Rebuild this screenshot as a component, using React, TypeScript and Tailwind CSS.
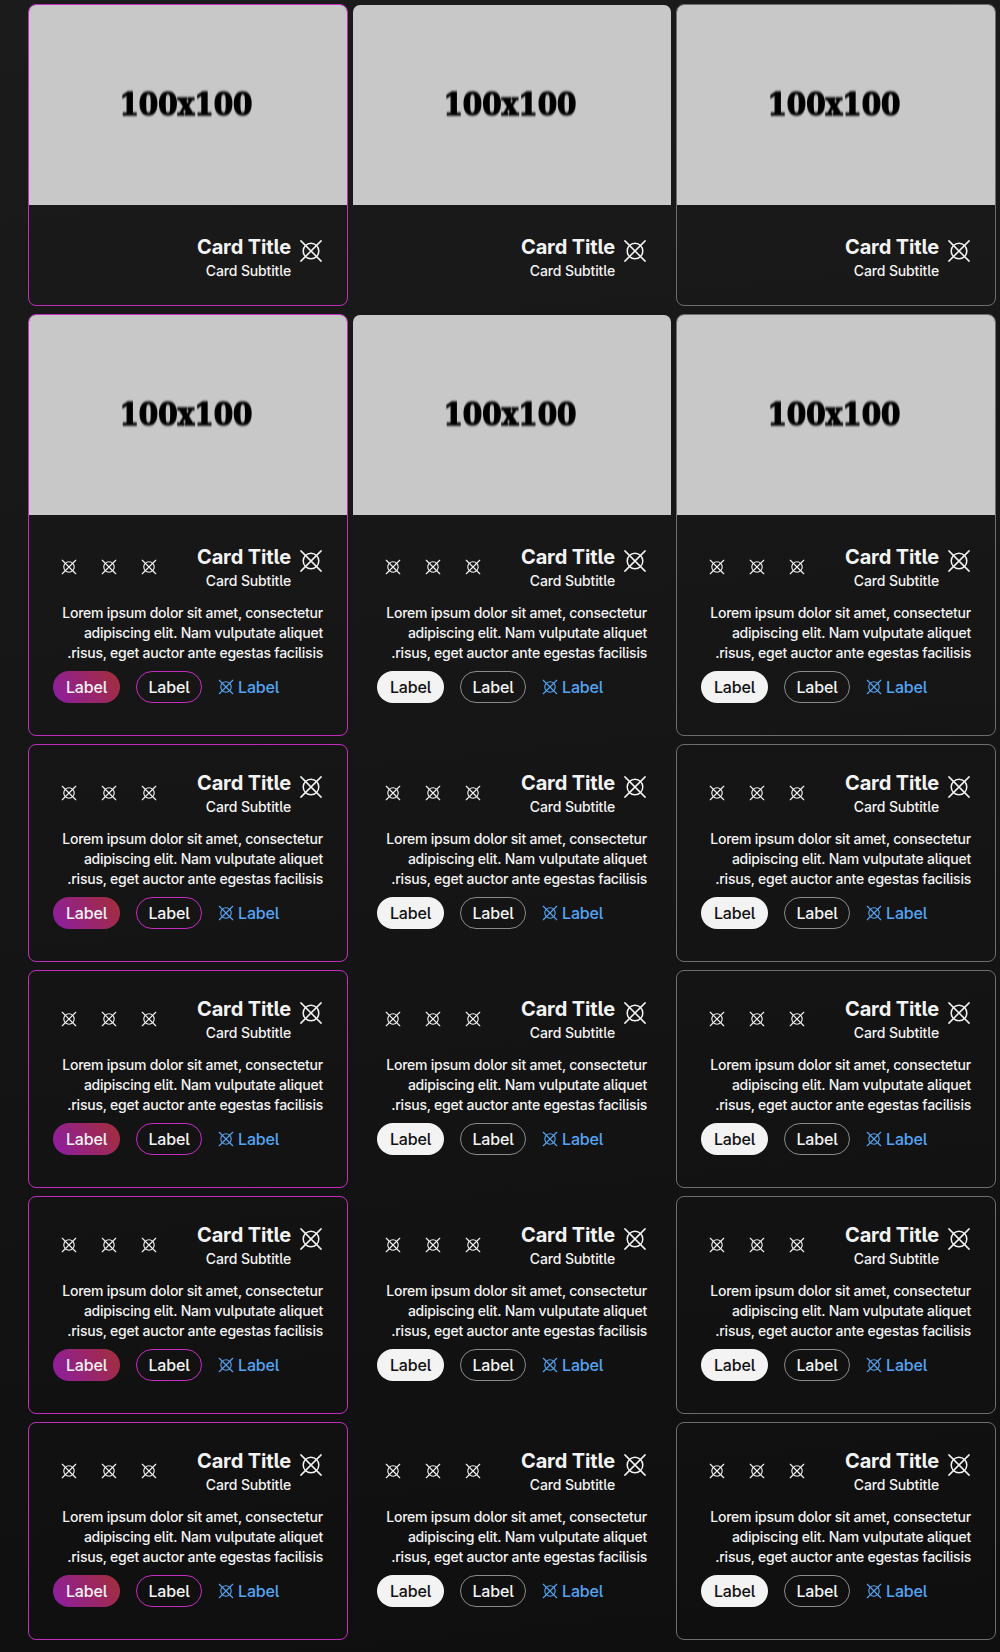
import React from "react";

type Variant = "accent" | "plain" | "outlined";

const FRAME: Record<Variant, string> = {
  accent: "border-[#c22dc0]",
  plain: "border-transparent",
  outlined: "border-[#6e6e6e]",
};

function Glyph({ className, stroke }: { className: string; stroke: number }) {
  return (
    <svg
      viewBox="0 0 24 24"
      fill="none"
      stroke="currentColor"
      strokeWidth={stroke}
      strokeLinecap="round"
      className={className}
    >
      <circle cx="12" cy="12" r="7.8" />
      <path d="M1.9 1.9 22.1 22.1M22.1 1.9 1.9 22.1" />
    </svg>
  );
}

function Media() {
  return (
    <div className="flex h-[200px] items-center justify-center overflow-hidden rounded-t-[7px] bg-[#c8c8c8]">
      <span
        dir="ltr"
        className="-mt-[2px] mr-1 scale-x-[0.9] font-['DejaVu_Serif'] text-[31px] leading-none font-bold text-black blur-[0.8px] [-webkit-text-stroke:1.3px_black]"
      >
        100x100
      </span>
    </div>
  );
}

function Header({ actions }: { actions: boolean }) {
  return (
    <div className="flex h-12 items-center justify-between">
      <div className="flex gap-2">
        <div className="mt-1.5 flex size-6 items-center justify-center">
          <Glyph className="size-6 shrink-0" stroke={1.5} />
        </div>
        <div className="text-start">
          <div className="text-xl leading-7 font-bold tracking-[-0.12px]">Card Title</div>
          <div className="text-sm leading-5 font-[450] tracking-[-0.14px]">Card Subtitle</div>
        </div>
      </div>
      {actions && (
        <div className="flex gap-2">
          {[0, 1, 2].map((i) => (
            <button key={i} className="flex size-8 items-center justify-center">
              <Glyph className="size-4" stroke={1.7} />
            </button>
          ))}
        </div>
      )}
    </div>
  );
}

function Buttons({ variant }: { variant: Variant }) {
  const accent = variant === "accent";
  return (
    <div className="mt-2 flex h-8 justify-end gap-4 text-base leading-none font-[450] tracking-[-0.15px]">
      <button dir="ltr" className="flex h-8 w-[62px] items-center gap-1 text-[#55a4f3]">
        <Glyph className="size-4 shrink-0" stroke={1.7} />
        Label
      </button>
      <button
        className={`flex h-8 w-[66px] items-center justify-center rounded-full border ${
          accent ? "border-[#c22dc0]" : "border-[#8a8a8a]"
        }`}
      >
        Label
      </button>
      <button
        className={`flex h-8 w-[67px] items-center justify-center rounded-full ${
          accent
            ? "bg-linear-[60deg,#8f1f98_10%,#a22d3e_95%]"
            : "bg-[#f3f3f3] text-[#111111]"
        }`}
      >
        Label
      </button>
    </div>
  );
}

function Card({ variant, media, full }: { variant: Variant; media: boolean; full: boolean }) {
  return (
    <article className={`rounded-lg border ${FRAME[variant]}`}>
      {media && <Media />}
      <div className={`px-6 ${media ? "pt-7" : "pt-6"} ${full ? "pb-8" : "pb-6"}`}>
        <Header actions={full} />
        {full && (
          <>
            <p className="mt-3 text-sm leading-5 font-[450] tracking-[-0.23px]">
              Lorem ipsum dolor sit amet, consectetur
              <br />
              adipiscing elit. Nam vulputate aliquet
              <br />
              risus, eget auctor ante egestas facilisis.
            </p>
            <Buttons variant={variant} />
          </>
        )}
      </div>
    </article>
  );
}

const VARIANTS: Variant[] = ["outlined", "plain", "accent"];
const ROWS = [
  { media: true, full: false },
  { media: true, full: true },
  { media: false, full: true },
  { media: false, full: true },
  { media: false, full: true },
  { media: false, full: true },
];

export default function App() {
  return (
    <main
      dir="rtl"
      className="h-[1652px] w-[1000px] overflow-hidden bg-linear-[174deg,#1b1b1b,#0f0f0f] pt-1 pr-1 font-[Inter,sans-serif] text-[#f3f3f3] [font-feature-settings:'cv05']"
    >
      <div className="grid grid-cols-[repeat(3,320px)] gap-x-1 gap-y-2">
        {ROWS.map((row, r) =>
          VARIANTS.map((variant) => <Card key={`${r}-${variant}`} variant={variant} {...row} />),
        )}
      </div>
    </main>
  );
}
